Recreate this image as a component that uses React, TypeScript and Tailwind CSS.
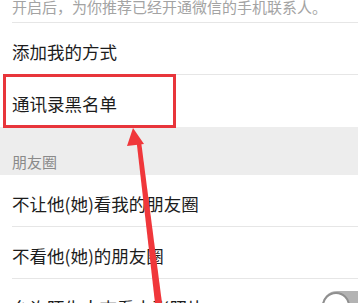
import React from 'react';

const font = { fontFamily: '"Noto Sans CJK SC", "Noto Sans", sans-serif' };

function Row({ label, last, children }: { label: string; last?: boolean; children?: React.ReactNode }) {
  return (
    <div className="h-[52px] pl-3 bg-white">
      <div
        className={
          'h-full flex items-center justify-between ' +
          (last ? '' : 'border-b border-[#e6e6e6]')
        }
      >
        <span className="mt-[6px] text-[17.5px] leading-[20px] text-[#1c1c1c] whitespace-nowrap">{label}</span>
        {children}
      </div>
    </div>
  );
}

function Toggle() {
  return (
    <div className="w-[52px] h-[30px] shrink-0 rounded-full bg-[#b3b3b3] flex items-center -mr-[16px] mt-[2px]">
      <div className="w-[28px] h-[28px] rounded-full bg-white border-2 border-[#8f8f8f]" />
    </div>
  );
}

export default function App() {
  return (
    <div className="relative w-[358px] h-[303px] overflow-hidden bg-white" style={font}>
      {/* description */}
      <div className="h-[25px] pl-3">
        <div className="h-full border-b border-[#e6e6e6]">
          <p className="-mt-[2px] text-[15px] leading-[18px] text-[#a3a3a3] whitespace-nowrap">
            开启后，为你推荐已经开通微信的手机联系人。
          </p>
        </div>
      </div>

      <Row label="添加我的方式" />
      <Row label="通讯录黑名单" last />

      {/* section header */}
      <div className="h-[48px] bg-[#ededed] pl-3 flex items-end pb-[4px]">
        <span className="text-[15px] leading-[18px] text-[#8a8a8a]">朋友圈</span>
      </div>

      <Row label="不让他(她)看我的朋友圈" />
      <Row label="不看他(她)的朋友圈" />
      <Row label="允许陌生人查看十张照片" last>
        <Toggle />
      </Row>

      {/* highlight box */}
      <div className="absolute left-[3px] top-[74px] w-[173px] h-[54px] border-[3px] border-[#e8353b]" />

      {/* arrow */}
      <svg className="absolute inset-0 pointer-events-none" width="358" height="303" viewBox="0 0 358 303">
        <path d="M136.5 141 L141 141 L162 303 L155 303 Z" fill="#f0373b" />
        <path d="M133 128 L144 144 L127 146 Z" fill="#f0373b" />
      </svg>
    </div>
  );
}
